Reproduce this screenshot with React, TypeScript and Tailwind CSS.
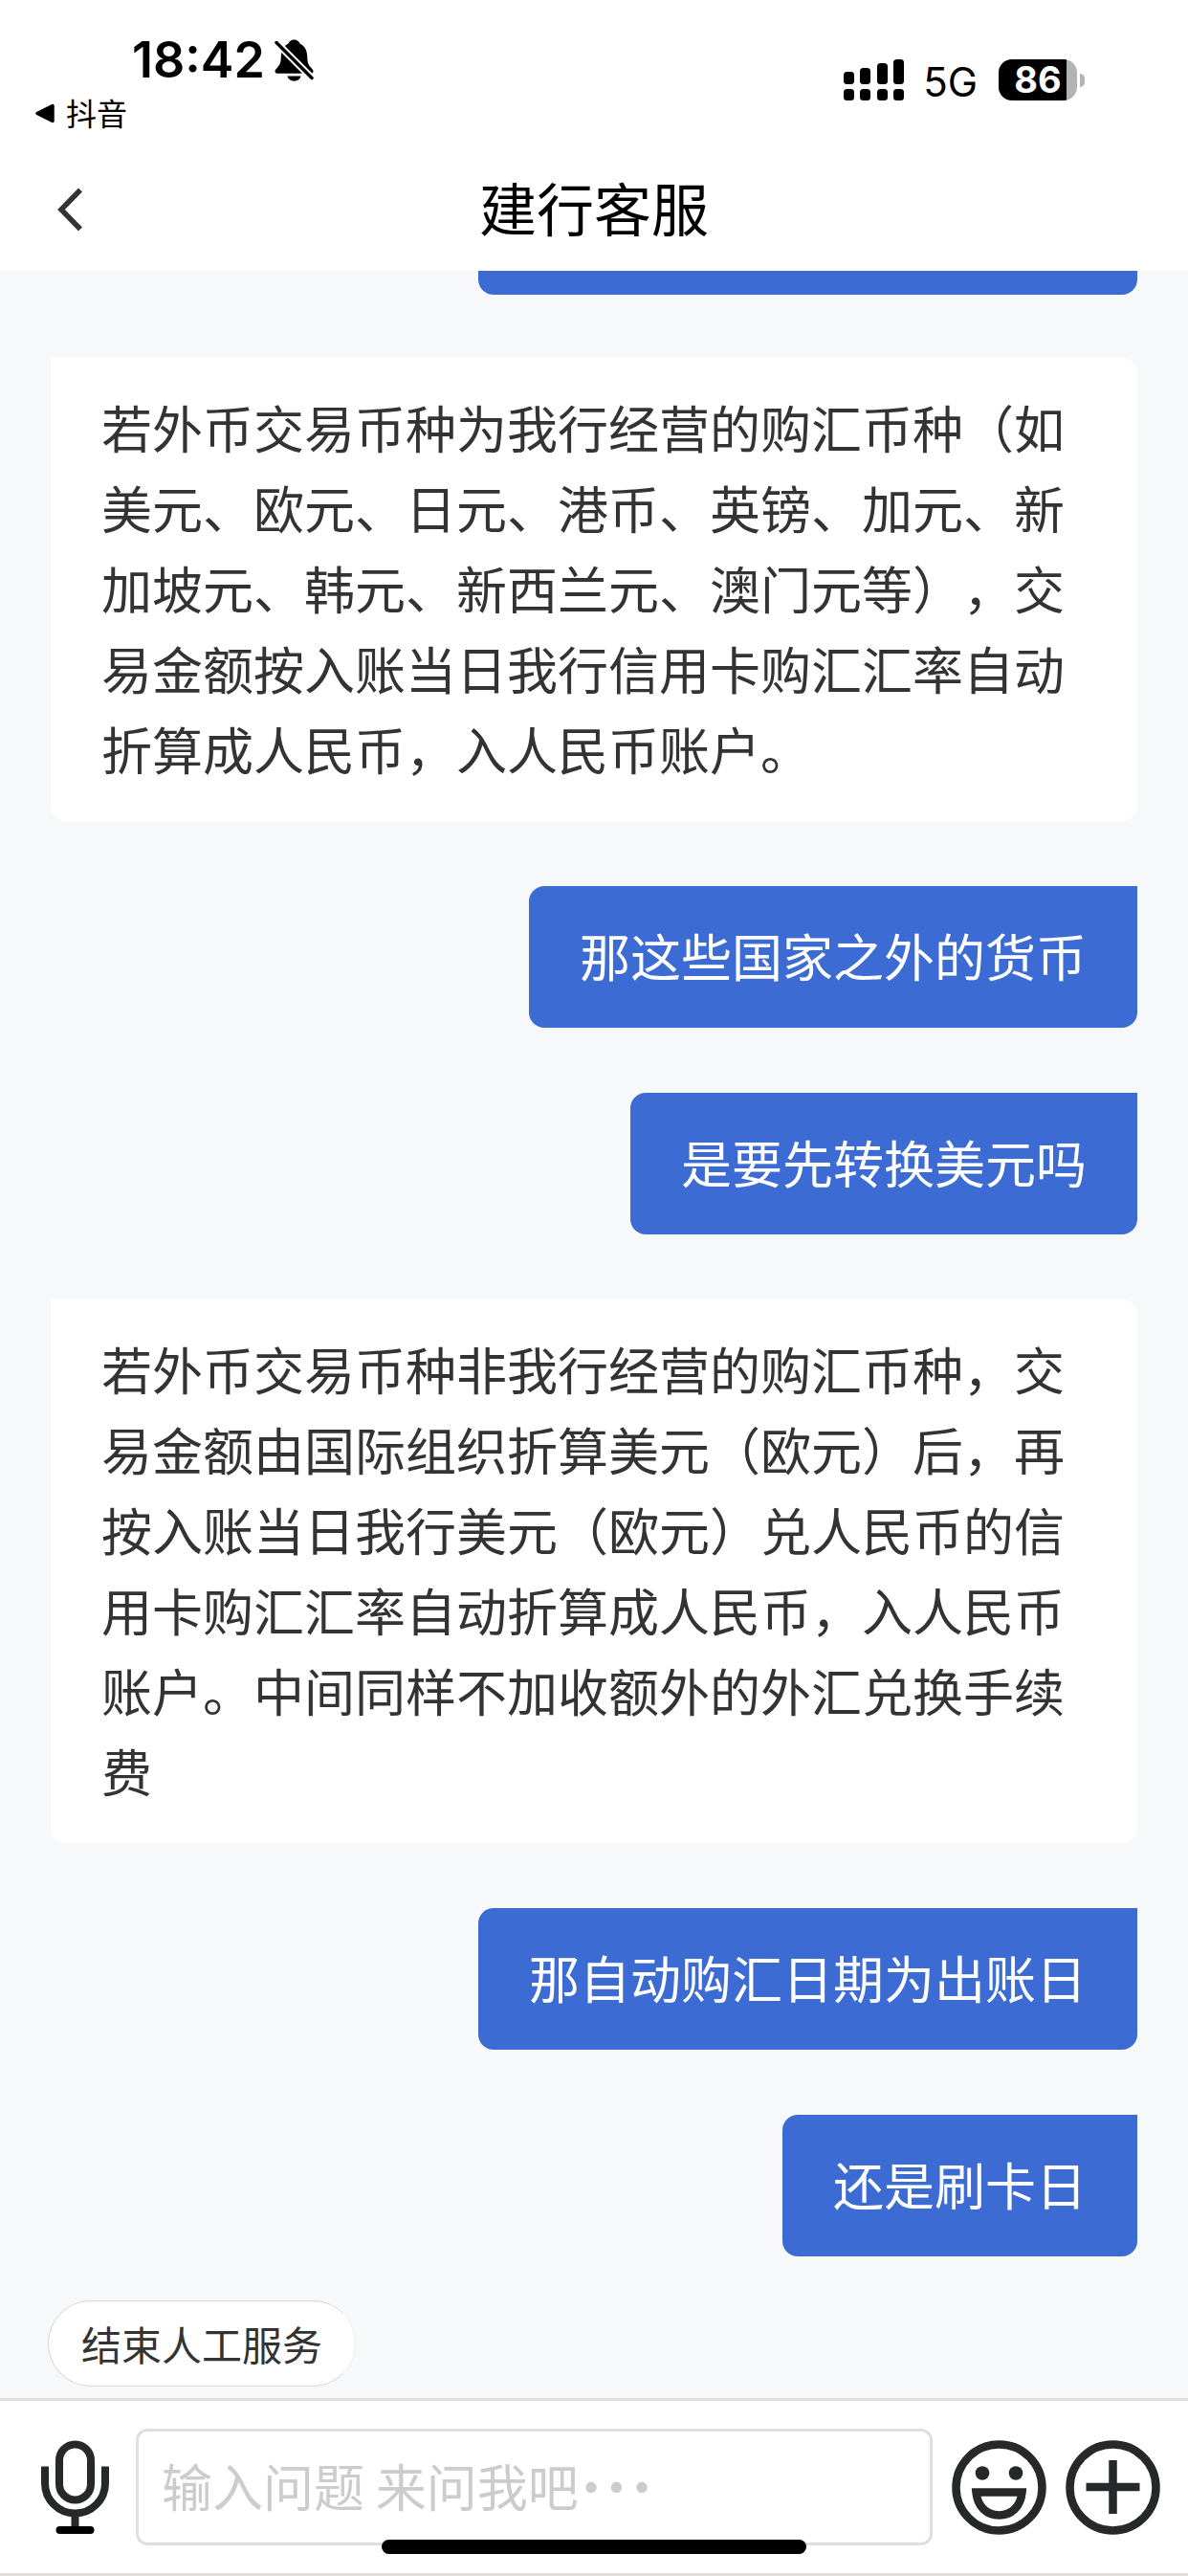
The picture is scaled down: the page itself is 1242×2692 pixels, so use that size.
import React, { useState } from 'react';

interface Message {
  id: number;
  from: 'agent' | 'user';
  text: string;
}

const messages: Message[] = [
  {
    id: 1,
    from: 'agent',
    text: '若外币交易币种为我行经营的购汇币种（如美元、欧元、日元、港币、英镑、加元、新加坡元、韩元、新西兰元、澳门元等），交易金额按入账当日我行信用卡购汇汇率自动折算成人民币，入人民币账户。',
  },
  { id: 2, from: 'user', text: '那这些国家之外的货币' },
  { id: 3, from: 'user', text: '是要先转换美元吗' },
  {
    id: 4,
    from: 'agent',
    text: '若外币交易币种非我行经营的购汇币种，交易金额由国际组织折算美元（欧元）后，再按入账当日我行美元（欧元）兑人民币的信用卡购汇汇率自动折算成人民币，入人民币账户。中间同样不加收额外的外汇兑换手续费',
  },
  { id: 5, from: 'user', text: '那自动购汇日期为出账日' },
  { id: 6, from: 'user', text: '还是刷卡日' },
];

const MutedBellIcon = () => (
  <svg width="41" height="44" viewBox="0 0 41 44" aria-hidden="true">
    <path
      d="M20.500 0.500c-3 0-5.200 1.800-6.200 4.300C9 7.300 7 12 6.800 18c-.2 6-.8 8.200-3.500 11.200C1.200 31.500.500 32.400.500 33.500c0 1.500 1.200 2.300 2.800 2.300h34.400c1.600 0 2.800-.8 2.800-2.300 0-1.600-1-2.300-3-4.500-2.500-3-3.100-5-3.300-11-.2-6-2.200-10.700-7.500-13.200-1-2.500-3.200-4.300-6.200-4.300z"
      fill="#000"
    />
    <path d="M13.500 38.500h14c-.8 3.200-3.500 5.200-7 5.200s-6.200-2-7-5.200z" fill="#000" />
    <path d="M-1 0.500l42 42" stroke="#fff" strokeWidth="7.500" />
    <path d="M2 3.500l37 37" stroke="#000" strokeWidth="3.400" strokeLinecap="round" />
  </svg>
);

const SignalIcon = () => (
  <svg width="63" height="43" viewBox="0 0 63 43" aria-hidden="true">
    <rect x="0" y="13" width="11" height="13" rx="3.500" />
    <rect x="17" y="9" width="11" height="17" rx="3.500" />
    <rect x="35" y="4" width="11" height="22" rx="3.500" />
    <rect x="52" y="0" width="11" height="26" rx="3.500" />
    <rect x="0" y="31" width="11" height="12" rx="3.500" />
    <rect x="17" y="31" width="11" height="12" rx="3.500" />
    <rect x="35" y="31" width="11" height="12" rx="3.500" />
    <rect x="52" y="31" width="11" height="12" rx="3.500" />
  </svg>
);

const MicIcon = () => (
  <svg width="73" height="98" viewBox="0 0 73 98" fill="none" stroke="#262829" aria-hidden="true">
    <rect x="20" y="4.500" width="33" height="58" rx="16.500" strokeWidth="8" />
    <path d="M5 27.500v17.500a31.500 31.500 0 0 0 63 0V27.500" strokeWidth="8" />
    <path d="M36.500 77v14" strokeWidth="8" />
    <path d="M20.500 94h32" stroke="#000" strokeWidth="8" strokeLinecap="round" />
  </svg>
);

const SmileIcon = () => (
  <svg width="99" height="99" viewBox="0 0 99 99" fill="none" stroke="#262829" aria-hidden="true">
    <circle cx="49.500" cy="49.500" r="45" strokeWidth="8.500" />
    <circle cx="32" cy="34.500" r="7.300" fill="#262829" stroke="none" />
    <circle cx="67" cy="34.500" r="7.300" fill="#262829" stroke="none" />
    <path d="M25.500 54.500h48c-1.500 15-11 24-24 24s-22.500-9-24-24z" strokeWidth="8.500" />
  </svg>
);

const PlusIcon = () => (
  <svg width="99" height="99" viewBox="0 0 99 99" fill="none" stroke="#262829" aria-hidden="true">
    <circle cx="49.500" cy="49.500" r="45" strokeWidth="8.500" />
    <path d="M49.500 21v56M21.500 49h56" strokeWidth="8.500" />
  </svg>
);

const StatusBar: React.FC = () => (
  <div className="flex items-start justify-between pl-9 pr-[108px] h-[153px] text-black">
    <div className="pt-[33px]">
      <div className="flex items-center gap-[10px] pl-[102px] h-[60px]">
        <span className="font-['Inter'] text-[52px] leading-[60px] font-semibold">18:42</span>
        <MutedBellIcon />
      </div>
      <a href="#douyin" className="flex items-center gap-3 h-[50px]">
        <svg width="21" height="21" viewBox="0 0 21 21" aria-hidden="true">
          <path d="M3 10.500L19 2.500v16z" stroke="#000" strokeWidth="3.500" strokeLinejoin="round" />
        </svg>
        <span className="text-[32px] leading-[48px] pb-0.5">抖音</span>
      </a>
    </div>
    <div className="flex items-center pt-[60px]">
      <SignalIcon />
      <span className="font-['Inter'] text-[42px] leading-[43px] ml-5 mt-1">5G</span>
      <div className="flex items-center ml-[22px]">
        <div className="flex items-center justify-center w-[82px] h-[43px] rounded-[14px] bg-linear-to-r from-black from-86% to-[#b3b3b3] to-86%">
          <span className="font-['Inter'] text-[38px] leading-[43px] font-bold text-white">86</span>
        </div>
        <div className="ml-[3px] w-[5px] h-[14px] rounded-r-full bg-[#b3b3b3]" />
      </div>
    </div>
  </div>
);

const MessageBubble: React.FC<{ message: Message }> = ({ message }) => {
  if (message.from === 'user') {
    return (
      <div className="self-end rounded-2xl rounded-tr-none bg-[#3c6cd3] px-[53px] pt-[30px] pb-[34px] text-white">
        {message.text}
      </div>
    );
  }
  return (
    <div className="rounded-2xl rounded-tl-none bg-white px-[53px] pt-[30px] pb-[34px] text-[#333333]">
      {message.text}
    </div>
  );
};

const App: React.FC = () => {
  const [draft, setDraft] = useState('');

  return (
    <div
      lang="zh-CN"
      className="flex flex-col h-screen bg-[#f6f8fa] font-['Noto_Sans_CJK_SC',sans-serif] [text-spacing-trim:space-all]"
    >
      <header className="shrink-0 bg-white">
        <StatusBar />
        <div className="grid grid-cols-[1fr_auto_1fr] items-center h-[130px] px-[60px]">
          <button type="button" aria-label="返回" className="justify-self-start">
            <svg width="30" height="46" viewBox="0 0 30 46" fill="none" aria-hidden="true">
              <path d="M24 3.500L4 24L24 44.500" stroke="#333" strokeWidth="5.500" />
            </svg>
          </button>
          <h1 className="text-[60px] leading-[80px] pb-1 text-black">建行客服</h1>
        </div>
      </header>

      <main className="flex flex-col flex-1 min-h-0 overflow-hidden px-[53px] gap-[68px] text-[53px] leading-[84px]">
        {/* tail of the previous message, scrolled under the header */}
        <div className="self-end shrink-0 w-[689px] h-[25px] -mb-0.5 rounded-b-2xl bg-[#3c6cd3]" />
        {messages.map((message) => (
          <MessageBubble key={message.id} message={message} />
        ))}
      </main>

      <div className="shrink-0 px-[50px] pb-3">
        <button
          type="button"
          className="block rounded-full border border-[#d8d8d8] border-r-[#f0f0f0] bg-white px-[34px] py-3 text-[42px] leading-[64px] text-[#333333]"
        >
          结束人工服务
        </button>
      </div>

      <footer className="relative shrink-0 flex items-center border-y-[3px] border-[#e2dede] bg-white pl-[42px] pr-[29px] py-[29px]">
        <button type="button" aria-label="语音输入" className="mr-[27px]">
          <MicIcon />
        </button>
        <input
          type="text"
          aria-label="输入问题"
          placeholder="输入问题 来问我吧···"
          value={draft}
          onChange={(e) => setDraft(e.target.value)}
          className="flex-1 min-w-0 h-[122px] rounded-xl border-[3px] border-[#e2dede] bg-white px-6 pb-1 text-[53px] text-[#333333] placeholder:text-[#cccccc] [font-feature-settings:'halt'] focus:outline-none"
        />
        <button type="button" aria-label="表情" className="ml-5">
          <SmileIcon />
        </button>
        <button type="button" aria-label="更多" className="ml-5">
          <PlusIcon />
        </button>
        <div className="absolute bottom-5 left-1/2 w-[444px] h-[15px] -translate-x-1/2 rounded-full bg-black" />
      </footer>
    </div>
  );
};

export default App;
